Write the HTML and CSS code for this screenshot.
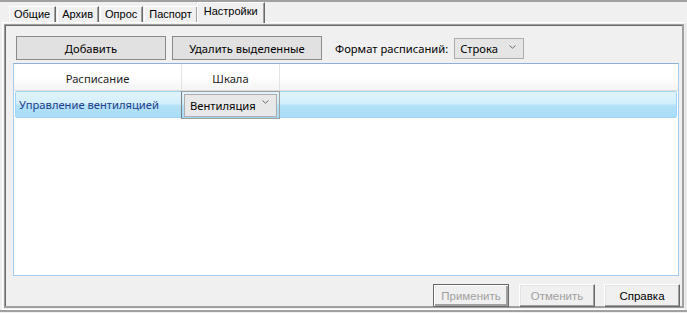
FILE: index.html
```html
<!DOCTYPE html>
<html lang="ru">
<head>
<meta charset="utf-8">
<title>Настройки</title>
<link rel="stylesheet" href="styles.css">
</head>
<body>
<div class="window">
  <div class="tabs">
    <div class="tab">Общие</div>
    <div class="tab">Архив</div>
    <div class="tab">Опрос</div>
    <div class="tab">Паспорт</div>
    <div class="tab active">Настройки</div>
  </div>
  <div class="page">
    <div class="inner">
      <div class="toolbar">
        <button class="btn">Добавить</button>
        <button class="btn">Удалить выделенные</button>
        <span class="label">Формат расписаний:</span>
        <div class="combo fmt"><span>Строка</span><svg class="chev" width="7" height="4" viewBox="0 0 7 4"><path d="M0.5 0.5 L3.5 3.2 L6.5 0.5" fill="none" stroke="#6d6d6d" stroke-width="1"/></svg></div>
      </div>
      <div class="grid">
        <div class="grid-head">
          <div class="hcol c1">Расписание</div>
          <div class="hcol c2">Шкала</div>
        </div>
        <div class="grid-row">
          <div class="cell c1">Управление вентиляцией</div>
          <div class="cell editor">
            <div class="combo cellcombo"><span>Вентиляция</span><svg class="chev" width="7" height="4" viewBox="0 0 7 4"><path d="M0.5 0.5 L3.5 3.2 L6.5 0.5" fill="none" stroke="#6d6d6d" stroke-width="1"/></svg></div>
          </div>
        </div>
      </div>
      <div class="footer">
        <button class="cbtn default" disabled>Применить</button>
        <button class="cbtn" disabled>Отменить</button>
        <button class="cbtn">Справка</button>
      </div>
    </div>
  </div>
</div>
</body>
</html>
```
FILE: styles.css
```css
html, body {
  margin: 0;
  padding: 0;
  background: #f0f0f0;
}
.window {
  width: 687px;
  height: 312px;
  box-sizing: border-box;
  border-top: 2px solid #a0a0a0;
  border-bottom: 2px solid #a0a0a0;
  padding: 0 1px 0 2px;
  display: flex;
  flex-direction: column;
  font-family: "Liberation Sans", Arial, sans-serif;
  font-size: 11px;
  color: #000;
}
.tabs {
  display: flex;
  align-items: flex-end;
  height: 20px;
  padding-left: 7px;
}
.tab {
  height: 16px;
  box-sizing: border-box;
  border-top: 1px solid #fff;
  border-left: 1px solid #fff;
  border-right: 1px solid #696969;
  box-shadow: inset -1px 0 #a0a0a0;
  padding: 0 5px 0 4px;
  line-height: 15px;
  background: #f0f0f0;
  margin-right: 1px;
}
.tab.active {
  position: relative;
  z-index: 1;
  height: 21px;
  margin: 0 -1px -1px -2px;
  padding: 1px 6px 0 6px;
  line-height: 15px;
}
.page {
  flex: 1;
  display: flex;
  border-top: 1px solid #fff;
  border-left: 1px solid #fff;
  border-right: 1px solid #e3e3e3;
  border-bottom: 1px solid #fff;
  padding: 1px;
}
.inner {
  flex: 1;
  display: flex;
  flex-direction: column;
  border-top: 1px solid #a0a0a0;
  border-left: 1px solid #a0a0a0;
  border-right: 2px solid #a0a0a0;
  border-bottom: 2px solid #a0a0a0;
  box-shadow: inset 1px 1px #696969;
  padding: 1px 0 0 1px;
}
.toolbar {
  display: flex;
  align-items: center;
  height: 24px;
  margin: 10px 0 0 10px;
  font-family: "Noto Sans", "Open Sans", sans-serif;
  font-size: 11.2px;
  color: #000;
}
.btn {
  width: 150px;
  height: 24px;
  background: #e1e1e1;
  border: 1px solid #8a8a8a;
  font: inherit;
  color: #000;
  padding: 0;
  margin-right: 6px;
}
.label {
  margin-left: 7px;
  margin-right: 6px;
}
.combo {
  display: flex;
  align-items: center;
  box-sizing: border-box;
  background: #e5e5e5;
  border: 1px solid #adadad;
  position: relative;
}
.chev {
  position: absolute;
  top: 6px;
}
.fmt {
  width: 70px;
  height: 21px;
  padding-left: 5px;
}
.fmt .chev {
  right: 7px;
}
.grid {
  margin: 3px 0 0 7px;
  width: 666px;
  height: 213px;
  box-sizing: border-box;
  border: 1px solid #a6cdef;
  border-top-color: #8db2d6;
  background: #fff;
  font-family: "Noto Sans", "Open Sans", sans-serif;
  font-size: 11.2px;
}
.grid-head {
  display: flex;
  height: 27px;
  box-sizing: border-box;
  background: linear-gradient(#ffffff 0%, #ffffff 50%, #f4f4f4 100%);
  border-bottom: 1px solid #dcdcdc;
}
.hcol {
  display: flex;
  align-items: center;
  justify-content: center;
  padding-top: 3px;
  box-sizing: border-box;
  border-right: 1px solid #e3e3e3;
  color: #1e1e1e;
}
.hcol.c1 { width: 168px; }
.hcol.c2 { width: 98px; }
.grid-row {
  display: flex;
  height: 27px;
  box-sizing: border-box;
  margin: 0 1px;
  border: 1px solid #9fd5f3;
  border-radius: 2px;
  background: linear-gradient(#e1f4fd 0%, #d2effc 45%, #b2e1f8 55%, #a9dcf7 100%);
}
.cell.c1 {
  width: 165px;
  display: flex;
  align-items: center;
  padding-left: 3px;
  box-sizing: border-box;
  color: #1f3d8c;
}
.editor {
  width: 99px;
  height: 28px;
  margin-top: -1px;
  box-sizing: border-box;
  border: 1px solid #a0a0a0;
  border-left-color: #7d7d7d;
  padding: 2px 2px 1px 2px;
}
.cellcombo {
  height: 23px;
  width: 93px;
  padding-left: 5px;
  background: #e8e8e8;
  color: #000;
}
.cellcombo .chev {
  right: 7px;
  top: 5px;
}
.footer {
  margin-top: auto;
  display: flex;
  justify-content: flex-end;
  padding-right: 2px;
  margin-bottom: -1px;
}
.cbtn {
  width: 76px;
  height: 23px;
  box-sizing: border-box;
  background: #f0f0f0;
  border: 1px solid;
  border-color: #fff #696969 #696969 #fff;
  box-shadow: inset -1px -1px #a0a0a0, inset 1px 1px #e3e3e3;
  font-family: "Liberation Sans", Arial, sans-serif;
  font-size: 11.5px;
  color: #000;
  padding: 0;
  margin-left: 10px;
}
.cbtn:last-child {
  margin-left: 9px;
}
.cbtn:disabled {
  color: #a0a0a0;
}
.cbtn.default {
  border-color: #696969;
  box-shadow: inset 1px 1px #fff, inset -2px -2px #a0a0a0, inset -1px -1px #696969;
}
```
